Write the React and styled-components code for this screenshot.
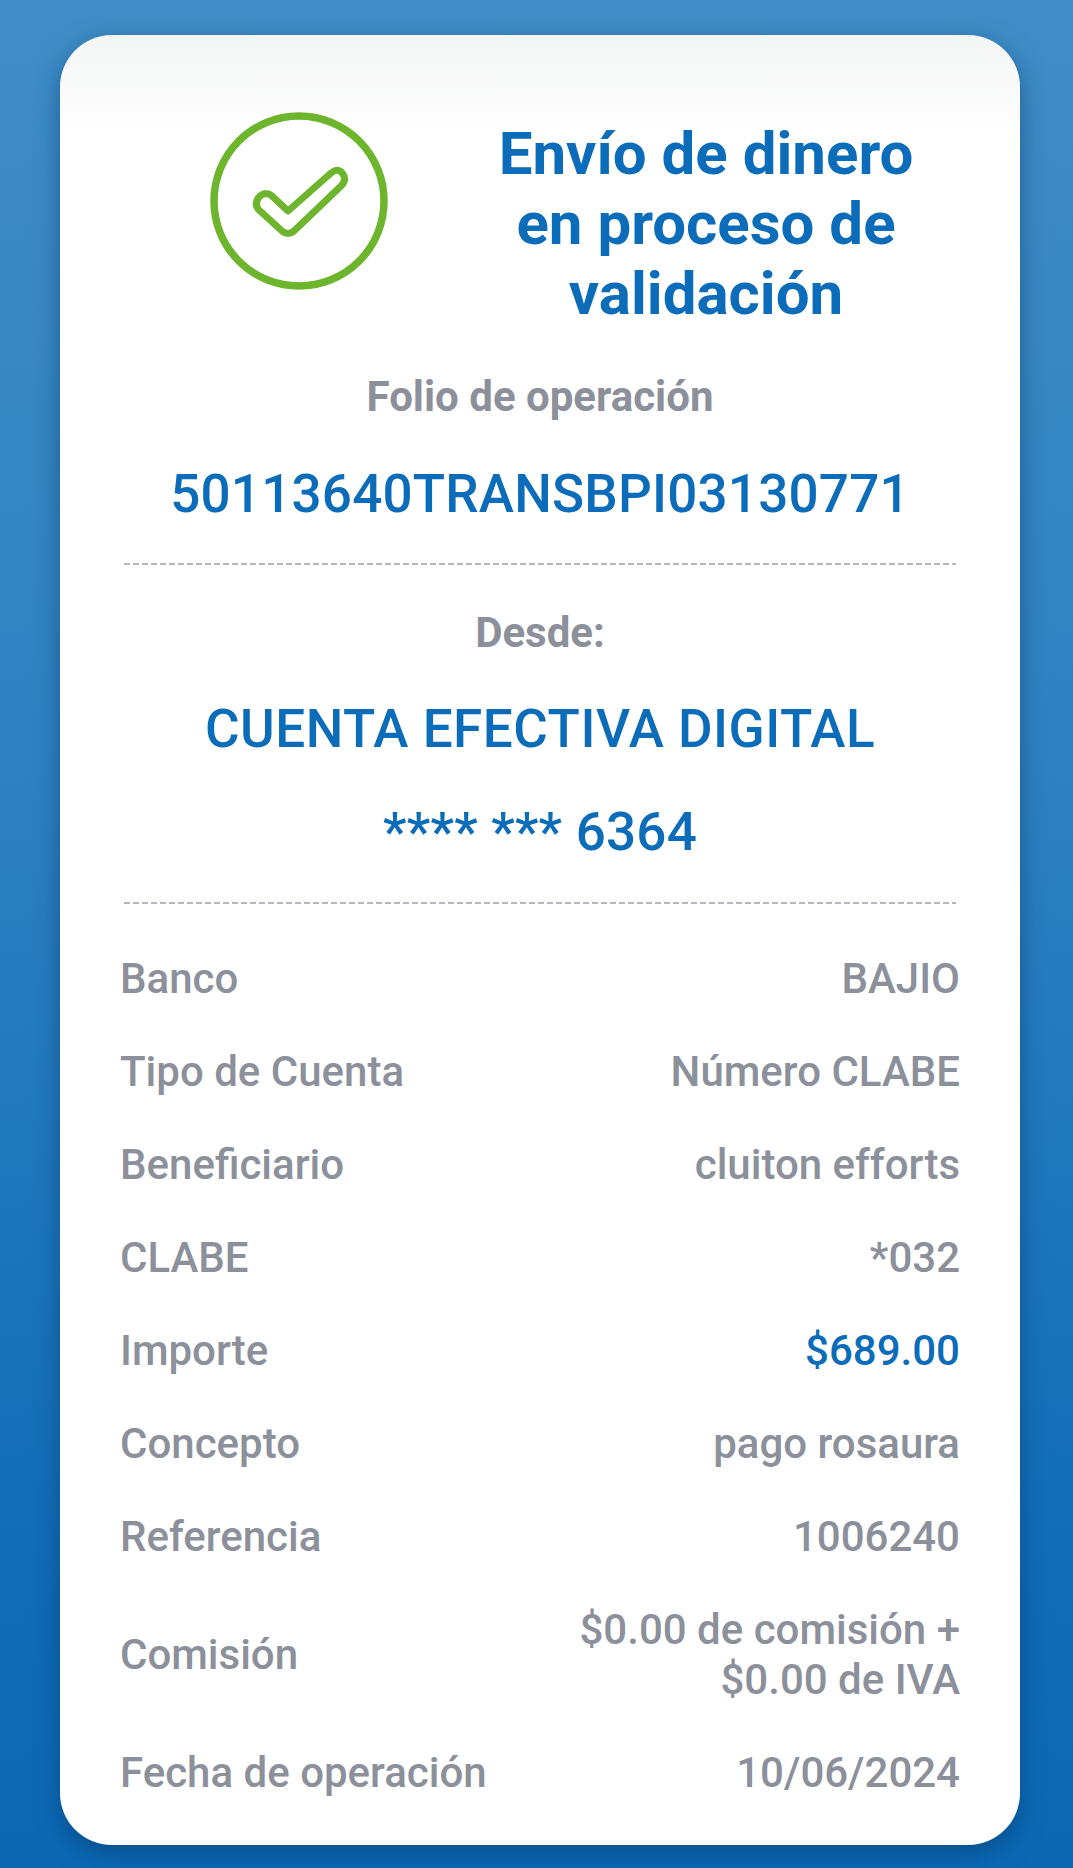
import React from "react";
import styled, { createGlobalStyle } from "styled-components";

const GlobalStyle = createGlobalStyle`
  html, body {
    margin: 0;
    padding: 0;
  }
  body {
    font-family: Roboto, "Liberation Sans", sans-serif;
    -webkit-font-smoothing: antialiased;
  }
`;

const Page = styled.div`
  box-sizing: border-box;
  width: 1073px;
  height: 1868px;
  padding: 35px 53px 23px 60px;
  background: linear-gradient(180deg, #3f8dc8 0%, #2f82c2 40%, #0f6cb7 85%, #0b69b4 100%);
  overflow: hidden;
`;

const Card = styled.main`
  box-sizing: border-box;
  height: 1810px;
  padding: 76px 60px 0 60px;
  border-radius: 52px;
  background: linear-gradient(180deg, #f3f4f4 0%, #ffffff 5.5%);
  box-shadow: 0 8px 24px rgba(5, 50, 100, 0.5);
`;

const Header = styled.header`
  display: grid;
  grid-template-columns: 332px 1fr;
  align-items: start;
`;

const IconBox = styled.div`
  display: flex;
  justify-content: flex-end;
  padding: 0 63px 0 0;
  svg {
    display: block;
  }
`;

const Title = styled.h1`
  margin: 0;
  padding: 8px 0 0;
  color: #0b6cb9;
  font-size: 60px;
  font-weight: 700;
  line-height: 70px;
  text-align: center;
`;

const Section = styled.section`
  display: flex;
  flex-direction: column;
  align-items: center;
  padding: ${({ $top }) => $top}px 4px 0;
`;

const Label = styled.div`
  color: #8b909b;
  font-size: 42px;
  font-weight: 700;
  line-height: 44px;
`;

const Value = styled.div`
  margin-top: ${({ $gap }) => $gap}px;
  color: #0b6cb9;
  font-size: 53px;
  font-weight: 500;
  line-height: 60px;
  letter-spacing: ${({ $spacing }) => $spacing || 0.2}px;
`;

const Divider = styled.hr`
  align-self: stretch;
  height: 2px;
  margin: ${({ $top }) => $top}px 0 0;
  border: 0;
  background: repeating-linear-gradient(90deg, #b3b6bb 0 6px, transparent 6px 9px);
`;

const Rows = styled.dl`
  display: flex;
  flex-direction: column;
  margin: 28px 0 0;
`;

const Row = styled.div`
  display: flex;
  align-items: center;
  justify-content: space-between;
  min-height: ${({ $tall }) => ($tall ? 143 : 93)}px;
`;

const Key = styled.dt`
  color: #8b909b;
  font-size: 42px;
  font-weight: 500;
  line-height: 50px;
`;

const Val = styled.dd`
  margin: 0;
  color: ${({ $accent }) => ($accent ? "#0b6cb9" : "#8b909b")};
  font-size: 42px;
  font-weight: 500;
  line-height: 50px;
  text-align: right;
`;

const details = [
  ["Banco", "BAJIO"],
  ["Tipo de Cuenta", "Número CLABE"],
  ["Beneficiario", "cluiton efforts"],
  ["CLABE", "*032"],
  ["Importe", "$689.00", true],
  ["Concepto", "pago rosaura"],
  ["Referencia", "1006240"],
];

const CheckIcon = () => (
  <svg width="180" height="180" viewBox="0 0 180 180" fill="none">
    <circle cx="90" cy="90" r="85" stroke="#6cb52d" strokeWidth="7.5" />
    <path
      d="M51 85 Q57 80 63 85 L79 100 L122 62 Q129 56 134 63 Q138 69 132 75 L85 120 Q79 125 73 120 L50 99 Q44 92 51 85 Z"
      stroke="#6cb52d"
      strokeWidth="7"
      strokeLinejoin="round"
    />
  </svg>
);

const App = () => {
  return (
    <>
      <GlobalStyle />
      <Page>
        <Card>
          <Header>
            <IconBox>
              <CheckIcon />
            </IconBox>
            <Title>
              Envío de dinero
              <br />
              en proceso de
              <br />
              validación
            </Title>
          </Header>

          <Section $top={46}>
            <Label>Folio de operación</Label>
            <Value $gap={45}>50113640TRANSBPI03130771</Value>
            <Divider $top={39} />
          </Section>

          <Section $top={46}>
            <Label>Desde:</Label>
            <Value $gap={44} $spacing={0.5}>CUENTA EFECTIVA DIGITAL</Value>
            <Value $gap={43}>**** *** 6364</Value>
            <Divider $top={40} />
          </Section>

          <Rows>
            {details.map(([key, val, accent]) => (
              <Row key={key}>
                <Key>{key}</Key>
                <Val $accent={accent}>{val}</Val>
              </Row>
            ))}
            <Row $tall>
              <Key>Comisión</Key>
              <Val>
                $0.00 de comisión +
                <br />
                $0.00 de IVA
              </Val>
            </Row>
            <Row>
              <Key>Fecha de operación</Key>
              <Val>10/06/2024</Val>
            </Row>
          </Rows>
        </Card>
      </Page>
    </>
  );
};

export default App;
